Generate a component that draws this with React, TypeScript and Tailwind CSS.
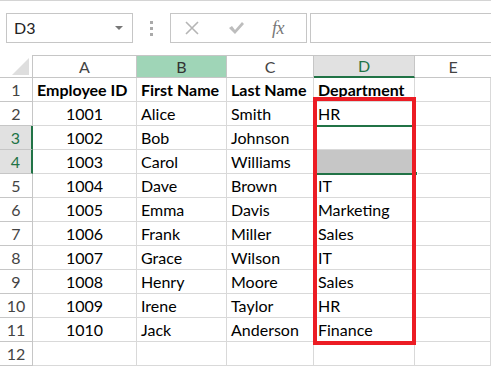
import React from "react";

const rows = [
  ["1001", "Alice", "Smith", "HR"],
  ["1002", "Bob", "Johnson", ""],
  ["1003", "Carol", "Williams", ""],
  ["1004", "Dave", "Brown", "IT"],
  ["1005", "Emma", "Davis", "Marketing"],
  ["1006", "Frank", "Miller", "Sales"],
  ["1007", "Grace", "Wilson", "IT"],
  ["1008", "Henry", "Moore", "Sales"],
  ["1009", "Irene", "Taylor", "HR"],
  ["1010", "Jack", "Anderson", "Finance"],
];

const cell = "h-[24px] border-r border-b border-[#d9d9d9] flex items-center pt-[1px] px-[4px] text-[16px] text-black whitespace-nowrap overflow-hidden";
const rowHead = "h-[24px] border-r border-b border-[#c6c6c6] flex items-center justify-center pt-[1px] text-[16px] text-[#444]";

export default function App() {
  return (
    <div className="w-[491px] h-[367px] bg-white overflow-hidden relative font-['Lato',sans-serif]">
      {/* formula bar */}
      <div className="h-[55px] border-t border-[#d4d4d4] flex items-start pt-[12px]">
        <div className="ml-[6px] w-[127px] h-[30px] border border-[#c6c6c6] flex items-center justify-between pl-[7px] pr-[9px]">
          <span className="text-[16px] text-[#222]">D3</span>
          <span className="w-0 h-0 border-l-[4px] border-r-[4px] border-t-[4px] border-l-transparent border-r-transparent border-t-[#777]" />
        </div>
        <div className="ml-[17px] w-[3px] h-[30px] flex flex-col justify-center gap-[3px]">
          <span className="w-[3px] h-[3px] bg-[#aaa]" />
          <span className="w-[3px] h-[3px] bg-[#aaa]" />
          <span className="w-[3px] h-[3px] bg-[#aaa]" />
        </div>
        <div className="ml-[17px] w-[137px] h-[30px] border border-[#c6c6c6] flex items-center pl-[12px]">
          <svg width="18" height="18" viewBox="0 0 18 18" className="stroke-[#b5b5b5]" strokeWidth="1.6">
            <path d="M3 3 L15 15 M15 3 L3 15" />
          </svg>
          <svg width="18" height="18" viewBox="0 0 18 18" className="ml-[26px] fill-[#bdbdbd]">
            <path d="M2 9 L5 7 L8 11 L15 3 L17 5 L8 15 Z" />
          </svg>
          <span className="ml-[27px] text-[18px] italic text-[#777] font-['Liberation_Serif',serif] tracking-tight">fx</span>
        </div>
        <div className="ml-[3px] flex-1 h-[30px] border border-[#c6c6c6] border-r-0" />
      </div>

      {/* grid */}
      <div className="grid grid-cols-[33px_104px_90px_87px_101px_76px]">
        <div className="h-[23px] border-r border-b border-[#c6c6c6] relative">
          <svg width="17" height="17" viewBox="0 0 17 17" className="absolute right-[3px] bottom-[2px]">
            <path d="M17 0 L17 17 L0 17 Z" fill="#dedede" />
          </svg>
        </div>
        <div className="h-[23px] border-r border-b border-t border-[#c6c6c6] flex items-center justify-center text-[16px] text-[#444]">A</div>
        <div className="h-[23px] border-r border-b border-t border-[#c6c6c6] bg-[#9fd5b7] flex items-center justify-center text-[16px] text-[#333]">B</div>
        <div className="h-[23px] border-r border-b border-t border-[#c6c6c6] flex items-center justify-center text-[16px] text-[#444]">C</div>
        <div className="h-[23px] border-r border-t border-[#c6c6c6] border-b-2 border-b-[#217346] bg-[#e1e1e1] flex items-center justify-center text-[16px] text-[#217346]">D</div>
        <div className="h-[23px] border-b border-t border-[#c6c6c6] flex items-center justify-center text-[16px] text-[#444]">E</div>

        <div className={rowHead}>1</div>
        <div className={cell + " font-bold"}>Employee ID</div>
        <div className={cell + " font-bold"}>First Name</div>
        <div className={cell + " font-bold"}>Last Name</div>
        <div className={cell + " font-bold"}>Department</div>
        <div className={cell} />

        {rows.map((r, i) => {
          const n = i + 2;
          const sel = n === 3 || n === 4;
          return (
            <React.Fragment key={n}>
              <div className={rowHead + (sel ? " bg-[#e1e1e1] text-[#217346] border-r-2 border-r-[#217346]" : "")}>{n}</div>
              <div className={cell + " justify-center"}>{r[0]}</div>
              <div className={cell}>{r[1]}</div>
              <div className={cell}>{r[2]}</div>
              <div className={cell + (n === 4 ? " bg-[#c6c6c6]" : "")}>{r[3]}</div>
              <div className={cell} />
            </React.Fragment>
          );
        })}

        <div className={rowHead}>12</div>
        <div className={cell} />
        <div className={cell} />
        <div className={cell} />
        <div className={cell} />
        <div className={cell} />
      </div>

      {/* selection D3:D4 */}
      <div className="absolute left-[314px] top-[125px] w-[101px] h-[2px] bg-[#217346]" />
      <div className="absolute left-[314px] top-[173px] w-[101px] h-[2px] bg-[#217346]" />
      <div className="absolute left-[413px] top-[171px] w-[5px] h-[5px] bg-[#217346] border border-white" />

      {/* red highlight */}
      <div className="absolute left-[313px] top-[97px] w-[103px] h-[248px] border-[4px] border-[#ec1c24]" />
    </div>
  );
}
